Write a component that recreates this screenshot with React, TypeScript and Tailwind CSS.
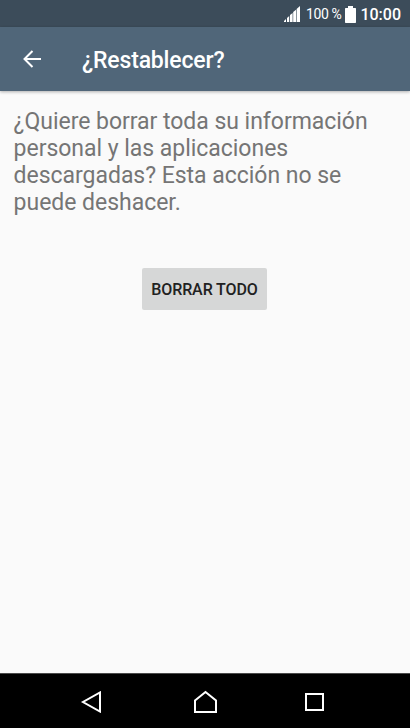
import type { ReactNode } from "react";

function SignalIcon() {
  return (
    <svg width="16" height="16" viewBox="0 0 16 16" fill="#fff">
      <path d="M0 16v-1l2-2v3zM3 16v-4l2.2-2v6zM6 16V9l2.6-2v9zM9.2 16V6l2.8-2.2V16zM12.6 16V3L16 0v16z" />
    </svg>
  );
}

function BatteryIcon() {
  return (
    <svg width="11" height="17" viewBox="0 0 11 17" fill="#fff">
      <path d="M3 0h5v2h2.4l.6.6v13.8l-.6.6H.6l-.6-.6V2.6L.6 2H3z" />
    </svg>
  );
}

function NavButton({ label, children }: { label: string; children: ReactNode }) {
  return (
    <button aria-label={label} className="flex h-full w-[110px] items-center justify-center">
      {children}
    </button>
  );
}

export default function App() {
  return (
    <div className="flex h-[728px] w-[410px] flex-col overflow-hidden bg-[#fafafa] font-['Roboto',sans-serif]">
      <div className="flex h-[27px] shrink-0 items-center justify-end bg-[#3c4c5a] pt-px pr-[9px] text-white">
        <SignalIcon />
        <span className="ml-[6px] text-[14px] leading-none tracking-[-0.4px]">100 %</span>
        <span className="mr-1 ml-1"><BatteryIcon /></span>
        <span className="pt-px text-[16px] leading-none font-medium">10:00</span>
      </div>

      <header className="z-10 flex h-16 shrink-0 items-center bg-[#506679] pl-[23px] text-white shadow-[0_1px_3px_rgba(0,0,0,0.3)]">
        <svg width="18" height="18" viewBox="0 0 18 18" fill="none" stroke="#fff" strokeWidth="2">
          <path d="M18 9H2M9.5 1 1.5 9l8 8" />
        </svg>
        <h1 className="ml-[41px] pt-[3px] text-[23px] leading-8 font-medium tracking-[-0.17px]">¿Restablecer?</h1>
      </header>

      <main className="flex flex-1 flex-col items-center">
        <p className="w-full pt-[17px] pl-[13.6px] text-[23px] leading-[27px] tracking-[-0.03px] text-[#757575]">
          ¿Quiere borrar toda su información<br />
          personal y las aplicaciones<br />
          descargadas? Esta acción no se<br />
          puede deshacer.
        </p>
        <button className="mt-[52px] mr-px h-[42px] w-[125px] rounded-[2px] bg-[#d6d7d7] pt-px text-[16px] font-medium tracking-[-0.1px] whitespace-nowrap text-[#212121]">
          BORRAR TODO
        </button>
      </main>

      <nav className="flex h-[55px] shrink-0 items-center justify-center border-t border-[#4a4a4a] bg-black pt-0.5">
        <NavButton label="Atrás">
          <svg width="22" height="22" viewBox="0 0 22 22" fill="none" stroke="#fff" strokeWidth="2" className="-ml-[8px]">
            <path d="M20 1.5v19L3 11z" />
          </svg>
        </NavButton>
        <NavButton label="Inicio">
          <svg width="24" height="24" viewBox="0 0 24 24" fill="none" stroke="#fff" strokeWidth="2">
            <path d="M2 10.5 12.5 2 23 10.5V22H2z" />
          </svg>
        </NavButton>
        <NavButton label="Recientes">
          <svg width="19" height="18" viewBox="0 0 19 18" fill="none" stroke="#fff" strokeWidth="2" className="-ml-[2px]">
            <path d="M1 1h17v16H1z" />
          </svg>
        </NavButton>
      </nav>
    </div>
  );
}
